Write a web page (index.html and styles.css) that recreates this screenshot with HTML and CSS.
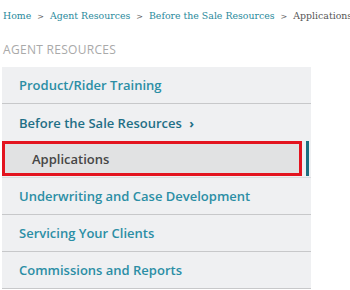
FILE: index.html
```html
<!DOCTYPE html>
<html lang="en">
<head>
    <meta charset="UTF-8">
    <meta name="viewport" content="width=device-width, initial-scale=1.0">
    <title>Applications</title>
    <link rel="stylesheet" href="styles.css">
</head>
<body>

    <div class="breadcrumb">
        <a href="#">Home</a><span class="sep">&gt;</span><a href="#">Agent Resources</a><span class="sep">&gt;</span><a href="#">Before the Sale Resources</a><span class="sep">&gt;</span><span class="current">Applications</span>
    </div>

    <div class="section-title">AGENT RESOURCES</div>

    <ul class="side-nav">
        <li class="nav-item"><a href="#">Product/Rider Training</a></li>
        <li class="nav-item open"><a href="#">Before the Sale Resources <span class="chev">&#8250;</span></a></li>
        <li class="nav-sub">
            <a href="#" class="sub-box">Applications</a>
            <span class="active-bar"></span>
        </li>
        <li class="nav-item"><a href="#">Underwriting and Case Development</a></li>
        <li class="nav-item"><a href="#">Servicing Your Clients</a></li>
        <li class="nav-item"><a href="#">Commissions and Reports</a></li>
    </ul>

</body>
</html>
```

FILE: styles.css
```css
* {
    margin: 0;
    padding: 0;
    box-sizing: border-box;
}

body {
    background-color: #ffffff;
    font-family: "Open Sans", Arial, sans-serif;
    overflow: hidden;
}

a {
    text-decoration: none;
}

.breadcrumb {
    padding: 9px 0 0 3px;
    height: 26px;
    font-family: "DejaVu Serif", Georgia, serif;
    font-size: 9.4px;
    line-height: 14px;
    white-space: nowrap;
    color: #555555;
}

.breadcrumb a {
    color: #2a8a9c;
}

.breadcrumb .sep {
    margin: 0 6px;
    color: #666666;
    font-size: 8px;
}

.section-title {
    padding: 17px 0 0 3px;
    height: 41px;
    font-family: "Open Sans", Arial, sans-serif;
    font-size: 12px;
    line-height: 14px;
    color: #a9a9a9;
    letter-spacing: 0.3px;
}

.side-nav {
    list-style: none;
    margin-left: 2px;
    width: 309px;
    background-color: #eff0f2;
}

.nav-item {
    height: 37px;
    border-bottom: 1px solid #c7c8ca;
    display: flex;
    align-items: center;
    padding-left: 17px;
}

.nav-item a {
    color: #2b8ea5;
    font-size: 13px;
    font-weight: 600;
}

.nav-item.open {
    height: 37px;
    border-bottom: none;
}

.nav-item.open a {
    color: #1f6f86;
}

.chev {
    margin-left: 4px;
    font-weight: 700;
}

.nav-sub {
    display: flex;
    height: 37px;
    border-bottom: 1px solid #dcdddf;
}

.sub-box {
    flex: 1;
    height: 35px;
    border: 3px solid #e3141f;
    background-color: #e1e2e3;
    display: flex;
    align-items: center;
    padding-left: 27px;
    color: #464646;
    font-size: 13px;
    font-weight: 600;
}

.active-bar {
    width: 3px;
    height: 35px;
    margin: 0 2px 0 4px;
    background-color: #1c6f80;
}
```
